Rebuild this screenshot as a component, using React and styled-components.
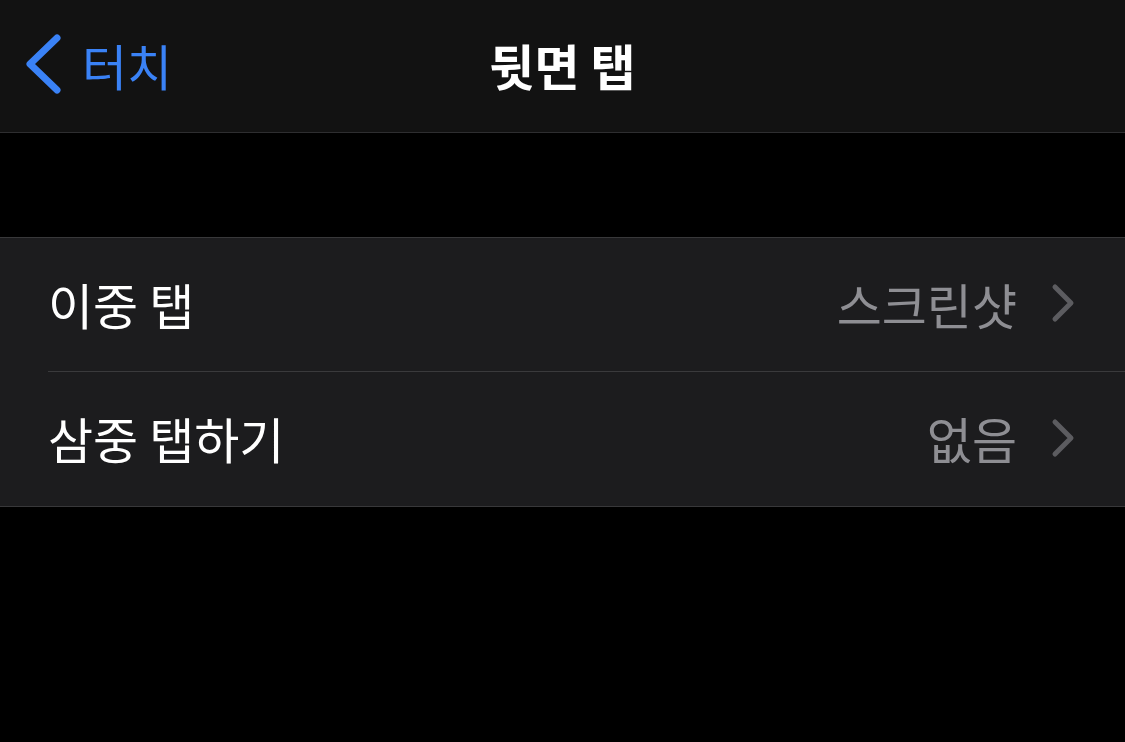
import { createGlobalStyle, styled } from "styled-components";

const GlobalStyle = createGlobalStyle`
  html, body {
    margin: 0;
    padding: 0;
    background: #000;
  }
  body {
    font-family: "Noto Sans CJK KR", "Noto Sans", sans-serif;
    -webkit-font-smoothing: antialiased;
  }
`;

const Screen = styled.div`
  width: 1125px;
  height: 742px;
  background: #000;
  overflow: hidden;
`;

const NavBar = styled.header`
  height: 132px;
  background: #121212;
  border-bottom: 1px solid #2e2e30;
  display: grid;
  grid-template-columns: 1fr auto 1fr;
  align-items: center;
`;

const BackButton = styled.button`
  display: flex;
  align-items: center;
  gap: 20px;
  padding: 0 0 4px 22px;
  background: none;
  border: 0;
  color: #3a82f6;
  font-family: inherit;
  font-size: 49px;
  line-height: 1;
  justify-self: start;
  cursor: pointer;
`;

const Title = styled.h1`
  margin: 0 0 4px;
  color: #fff;
  font-size: 49px;
  font-weight: 700;
  line-height: 1;
`;

const Spacer = styled.div`
  height: 104px;
`;

const Group = styled.section`
  background: #1c1c1e;
  border-top: 1px solid #38383a;
  border-bottom: 1px solid #38383a;
`;

const Row = styled.div`
  height: 134px;
  margin-left: 48px;
  padding: 0 48px 3px 0;
  box-sizing: border-box;
  display: flex;
  align-items: center;
  justify-content: space-between;
  border-bottom: ${({ $last }) => ($last ? "0" : "1px solid #3a3a3c")};
`;

const Label = styled.span`
  color: #fff;
  font-size: 49px;
  line-height: 1;
`;

const Detail = styled.span`
  display: flex;
  align-items: center;
  gap: 32px;
  color: #8e8e93;
  font-size: 49px;
  line-height: 1;
`;

function BackChevron() {
  return (
    <svg width="40" height="60" viewBox="0 0 40 60" fill="none">
      <path
        d="M35 4 L8 30 L35 56"
        stroke="#3a82f6"
        strokeWidth="7"
        strokeLinecap="round"
        strokeLinejoin="round"
      />
    </svg>
  );
}

function RowChevron() {
  return (
    <svg width="28" height="42" viewBox="0 0 28 42" fill="none">
      <path
        d="M6 5 L22 21 L6 37"
        stroke="#5c5c60"
        strokeWidth="5"
        strokeLinecap="round"
        strokeLinejoin="round"
      />
    </svg>
  );
}

const rows = [
  { label: "이중 탭", value: "스크린샷" },
  { label: "삼중 탭하기", value: "없음" },
];

export default function App() {
  return (
    <Screen>
      <GlobalStyle />
      <NavBar>
        <BackButton>
          <BackChevron />
          터치
        </BackButton>
        <Title>뒷면 탭</Title>
        <div />
      </NavBar>
      <Spacer />
      <Group>
        {rows.map((r, i) => (
          <Row key={r.label} $last={i === rows.length - 1}>
            <Label>{r.label}</Label>
            <Detail>
              {r.value}
              <RowChevron />
            </Detail>
          </Row>
        ))}
      </Group>
    </Screen>
  );
}
